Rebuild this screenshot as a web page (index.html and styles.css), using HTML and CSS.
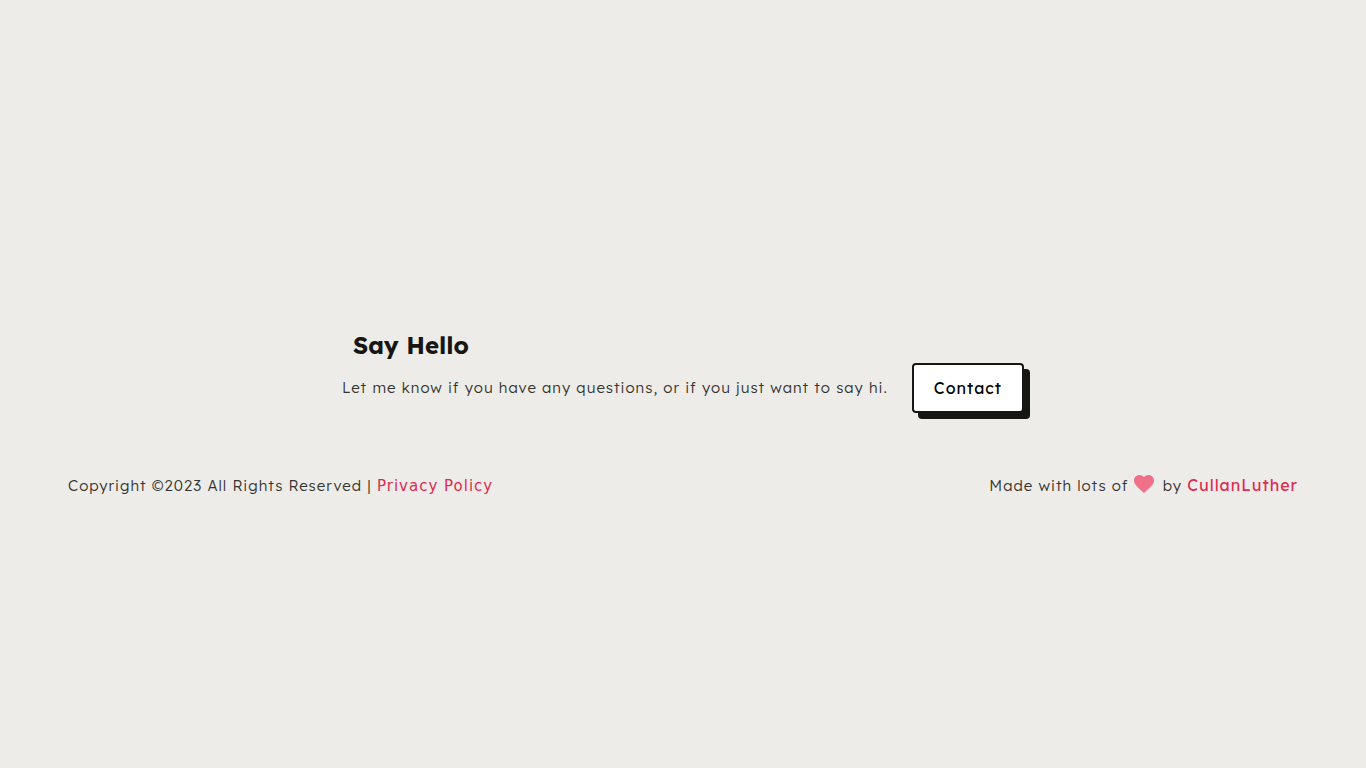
FILE: index.html
```html
<!DOCTYPE html>
<html lang="en">
<head>
<meta charset="UTF-8" />
<meta name="viewport" content="width=device-width, initial-scale=1" />
<title>Contact</title>
<link rel="stylesheet" href="styles.css">
</head>
<body>
  <main class="contact">
    <div class="contact-text">
      <h1>Say Hello</h1>
      <p>Let me know if you have any questions, or if you just want to say hi.</p>
    </div>
    <button class="contact-button" type="button">Contact</button>
  </main>

  <footer>
    <p>Copyright ©2023 All Rights Reserved | <a class="privacy" href="#">Privacy Policy</a></p>
    <p class="credit">Made with lots of
      <svg class="heart" viewBox="0 0 20 18" role="img" aria-label="love"><path d="M10 18L8.6 16.8C3.4 12.3 0 9.4 0 5.6C0 2.4 2.4 0 5.5 0C7.2 0 8.9.8 10 2.1C11.1.8 12.8 0 14.5 0C17.6 0 20 2.4 20 5.6C20 9.4 16.6 12.3 11.4 16.8Z"/></svg>
      by <a class="author" href="#">CullanLuther</a></p>
  </footer>
</body>
</html>
```
FILE: styles.css
```css
* {
  box-sizing: border-box;
}
body {
  font-family: Lexend, Inter, sans-serif;
  font-size: 15px;
  font-weight: 300;
  line-height: 24px;
  letter-spacing: 1px;
  background: #edece8;
  color: #161613;
  margin: 0;
  min-height: 100vh;
  padding: 0 68px;
  display: flex;
  flex-direction: column;
  justify-content: center;
}
h1,
p {
  margin: 0;
}
p {
  color: #33332f;
}
.contact {
  display: flex;
  justify-content: center;
  align-items: flex-end;
  gap: 24px;
  padding-top: 58px;
}
.contact-text {
  padding-bottom: 13px;
}
h1 {
  font-size: 24px;
  font-weight: 700;
  line-height: 32px;
  letter-spacing: normal;
  padding-left: 11px;
  margin-bottom: 15px;
}
.contact-button {
  font-family: inherit;
  font-size: 16px;
  font-weight: 400;
  line-height: 24px;
  letter-spacing: 1px;
  color: #000;
  background: #fff;
  border: 2px solid #161613;
  border-radius: 4px;
  box-shadow: 6px 6px 0 #161613;
  padding: 11px 20px;
  cursor: pointer;
}
footer {
  display: flex;
  justify-content: space-between;
  align-items: baseline;
  margin-top: 60px;
}
a {
  color: #dc2c52;
  text-decoration: none;
}
.privacy {
  font-family: "DejaVu Sans", sans-serif;
  font-weight: 400;
}
.author {
  font-size: 16px;
  font-weight: 400;
}
.heart {
  width: 20px;
  height: 18px;
  margin-right: 4px;
  vertical-align: -2px;
  fill: #f0708a;
}
```
